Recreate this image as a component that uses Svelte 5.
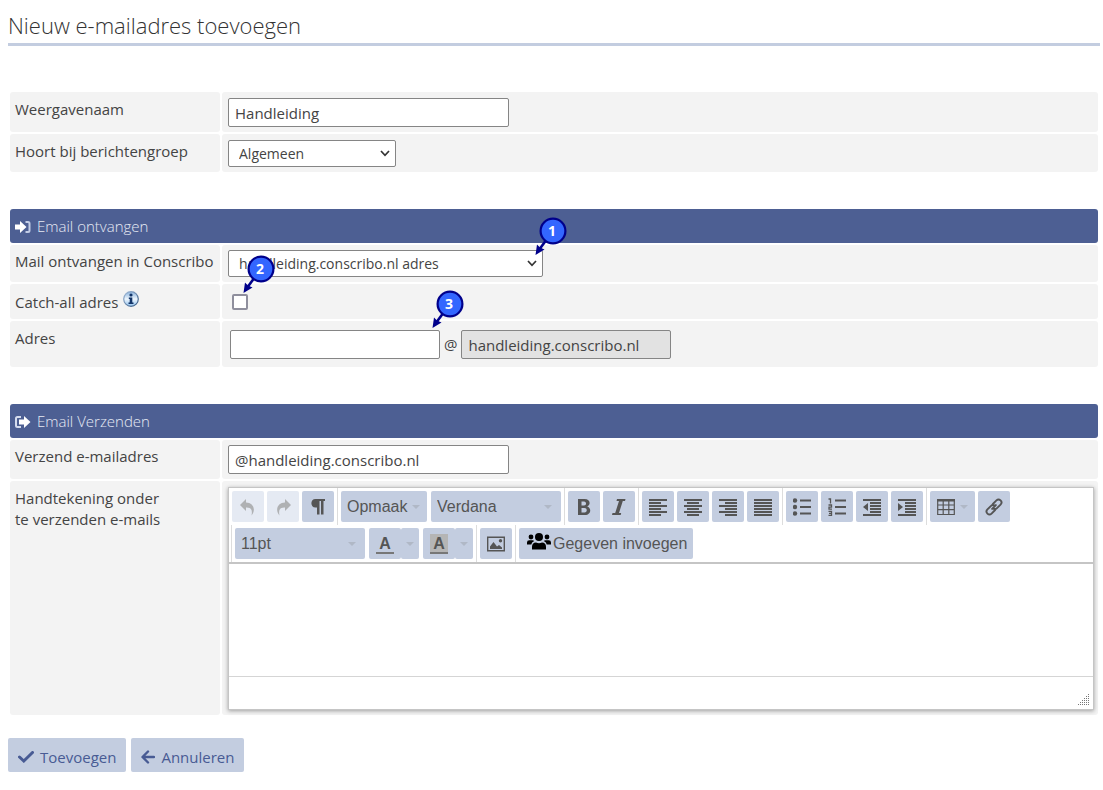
<script>
  let displayName = $state('Handleiding');
  let group = $state('Algemeen');
  let receive = $state('handleiding.conscribo.nl adres');
  let catchAll = $state(false);
  let address = $state('');
  let sender = $state('@handleiding.conscribo.nl');
  let signature = $state('');

  const aligns = [
    { name: 'Links uitlijnen', lines: [[0, 18], [0, 12], [0, 18], [0, 12], [0, 18], [0, 12]] },
    { name: 'Centreren', lines: [[0, 18], [3, 12], [0, 18], [3, 12], [0, 18], [3, 12]] },
    { name: 'Rechts uitlijnen', lines: [[0, 18], [6, 12], [0, 18], [6, 12], [0, 18], [6, 12]] },
    { name: 'Uitvullen', lines: [[0, 18], [0, 18], [0, 18], [0, 18], [0, 18], [0, 18]] }
  ];
</script>

{#snippet marker(n, kind)}
  <svg class="marker {kind}" viewBox="0 0 34 40" width="34" height="40" aria-hidden="true">
    <path d="M13 23 L6 32.500" stroke="#00008b" stroke-width="2.600" />
    <path d="M1.500 39 L3 28.500 L6 31.500 L10.500 33.500 Z" fill="#00008b" />
    <circle cx="19" cy="15" r="12.400" fill="#3366ff" stroke="#00008b" stroke-width="2.200" />
    <text x="18" y="20" text-anchor="middle">{n}</text>
  </svg>
{/snippet}

{#snippet caret()}
  <svg class="caret" viewBox="0 0 8 4" width="8" height="4" aria-hidden="true"><path d="M0 0h8L4 4z" fill="#b0b8c6" /></svg>
{/snippet}

{#snippet chevron()}
  <svg class="chevron" viewBox="0 0 10 7" width="10" height="7" aria-hidden="true"><path d="M1 1l4 4.300L9 1" fill="none" stroke="#333" stroke-width="1.700" /></svg>
{/snippet}

<main>
  <h1>Nieuw e-mailadres toevoegen</h1>

  <form onsubmit={(e) => e.preventDefault()}>
    <section>
      <div class="row">
        <div class="cell"><label for="name">Weergavenaam</label></div>
        <div class="cell"><input id="name" class="text wide" type="text" bind:value={displayName} /></div>
      </div>
      <div class="row">
        <div class="cell"><label for="group">Hoort bij berichtengroep</label></div>
        <div class="cell">
          <div class="drop short">
            <select id="group" bind:value={group}><option>Algemeen</option></select>
            {@render chevron()}
          </div>
        </div>
      </div>
    </section>

    <section>
      <h2>
        <svg viewBox="0 0 16 14" width="16" height="14" aria-hidden="true">
          <path d="M0 4.500h5V1l6.500 6L5 13V9.500H0z" fill="#fff" />
          <path d="M10.500 2H13q1.500 0 1.500 1.500v7q0 1.500-1.500 1.500h-2.500" fill="none" stroke="#c3cde6" stroke-width="2" />
        </svg>
        Email ontvangen
      </h2>
      <div class="row">
        <div class="cell tight"><label for="receive">Mail ontvangen in Conscribo</label></div>
        <div class="cell tight">
          <div class="drop long">
            <select id="receive" bind:value={receive}><option>handleiding.conscribo.nl adres</option></select>
            {@render chevron()}
            {@render marker(1, 'on-drop')}
          </div>
        </div>
      </div>
      <div class="row">
        <div class="cell catch">
          <label for="catch">Catch-all adres</label>
          <svg viewBox="0 0 16 16" width="16" height="16" role="img" aria-label="Informatie">
            <defs>
              <linearGradient id="info" x1="0" y1="0" x2="0" y2="1">
                <stop offset="0" stop-color="#86b0dc" /><stop offset=".5" stop-color="#eef6fd" /><stop offset="1" stop-color="#8fc0ee" />
              </linearGradient>
              <linearGradient id="ring" x1="0" y1="0" x2="1" y2="1">
                <stop offset="0" stop-color="#a3bcda" /><stop offset="1" stop-color="#34567f" />
              </linearGradient>
            </defs>
            <circle cx="8" cy="8" r="7.300" fill="url(#info)" stroke="url(#ring)" stroke-width="1.200" />
            <circle cx="8" cy="4" r="1.600" fill="#123468" />
            <path d="M5.800 6.500h3.500v5h1.200V13H5.500v-1.500h1.200V8h-.900z" fill="#123468" />
          </svg>
        </div>
        <div class="cell check">
          <span class="box">
            <input id="catch" type="checkbox" bind:checked={catchAll} />
            {@render marker(2, 'on-check')}
          </span>
        </div>
      </div>
      <div class="row">
        <div class="cell"><label for="address">Adres</label></div>
        <div class="cell address">
          <span class="box">
            <input id="address" class="text" type="text" bind:value={address} />
            {@render marker(3, 'on-text')}
          </span>
          <span>@</span>
          <input class="text" type="text" value="handleiding.conscribo.nl" aria-label="Domein" disabled />
        </div>
      </div>
    </section>

    <section>
      <h2>
        <svg viewBox="0 0 16 14" width="16" height="14" aria-hidden="true">
          <path d="M4 4.500h5V1l6.500 6L9 13V9.500H4z" fill="#fff" />
          <path d="M6 2H2.500Q1 2 1 3.500v7Q1 12 2.500 12H6" fill="none" stroke="#d5dcee" stroke-width="2" />
        </svg>
        Email Verzenden
      </h2>
      <div class="row">
        <div class="cell tight"><label for="sender">Verzend e-mailadres</label></div>
        <div class="cell tight"><input id="sender" class="text wide" type="text" bind:value={sender} /></div>
      </div>
      <div class="row">
        <div class="cell"><label for="signature">Handtekening onder<br />te verzenden e-mails</label></div>
        <div class="cell">
          <div class="editor">
            <div class="toolbar" role="toolbar" aria-label="Opmaak">
              <div class="group">
                <button type="button" disabled aria-label="Ongedaan maken">
                  <svg viewBox="0 0 18 18" width="18" height="18"><path d="M7 1L1 7l6 6V9.500c4-.300 7 1.500 5.500 8C17.500 11.500 14 4.500 7 4.500z" fill="#999" /></svg>
                </button>
                <button type="button" disabled aria-label="Opnieuw">
                  <svg viewBox="0 0 18 18" width="18" height="18"><path d="M11 1l6 6-6 6V9.500c-4-.300-7 1.500-5.500 8C.500 11.500 4 4.500 11 4.500z" fill="#999" /></svg>
                </button>
                <button type="button" aria-label="Alineatekens">
                  <svg viewBox="0 0 16 18" width="16" height="18"><path d="M5.500 1H15v2h-1.500v13.500H11V3H9.500v13.500H7V9.500H5.500C0 9.500 0 1 5.500 1z" fill="#555" /></svg>
                </button>
              </div>
              <div class="group lists">
                <div class="pick format"><select aria-label="Opmaakstijl"><option>Opmaak</option></select>{@render caret()}</div>
                <div class="pick"><select aria-label="Lettertype"><option>Verdana</option></select>{@render caret()}</div>
              </div>
              <div class="group">
                <button type="button" aria-label="Vet">
                  <svg viewBox="0 0 14 18" width="14" height="18"><path fill-rule="evenodd" d="M1 1h6.500c6 0 6.500 6 2.700 7.500C15 10 14 17 8 17H1zM4.500 3.500v4H7c2.700 0 2.700-4 0-4zM4.500 10v4.500h3c3 0 3-4.500 0-4.500z" fill="#555" /></svg>
                </button>
                <button type="button" aria-label="Cursief">
                  <svg viewBox="0 0 14 18" width="14" height="18"><path d="M5 1h8.500l-.500 2h-2.200L7 15h2.200l-.500 2H0l.500-2h2.700L7 3H4.500z" fill="#555" /></svg>
                </button>
              </div>
              <div class="group">
                {#each aligns as a}
                  <button type="button" aria-label={a.name}>
                    <svg viewBox="0 0 18 18" width="18" height="18">
                      {#each a.lines as [x, w], i}<rect {x} y={i * 3 + 1} width={w} height="2" fill="#555" />{/each}
                    </svg>
                  </button>
                {/each}
              </div>
              <div class="group">
                <button type="button" aria-label="Opsommingstekens">
                  <svg viewBox="0 0 18 18" width="18" height="18" fill="#555"><circle cx="2" cy="2.500" r="2.200" /><circle cx="2" cy="9" r="2.200" /><circle cx="2" cy="15.500" r="2.200" /><path d="M7 1.500h11v2H7zM7 8h11v2H7zM7 14.500h11v2H7z" /></svg>
                </button>
                <button type="button" aria-label="Genummerde lijst">
                  <svg viewBox="0 0 18 18" width="18" height="18"><path d="M7 1.500h11v2H7zM7 8h11v2H7zM7 14.500h11v2H7z" fill="#555" /><path d="M.500 1H2.500V5.500M.500 7h3v2.200h-2.500v2h3M.500 13.300h3v4h-3M1 15.300h2.500" fill="none" stroke="#555" stroke-width="1.300" /></svg>
                </button>
                <button type="button" aria-label="Inspringing verkleinen">
                  <svg viewBox="0 0 18 18" width="18" height="18" fill="#555"><path d="M0 1h18v2H0zM7 4h11v2H7zM7 7h11v2H7zM7 10h11v2H7zM7 13h11v2H7zM0 16h18v2H0zM5 5v8L0 9z" /></svg>
                </button>
                <button type="button" aria-label="Inspringing vergroten">
                  <svg viewBox="0 0 18 18" width="18" height="18" fill="#555"><path d="M0 1h18v2H0zM7 4h11v2H7zM7 7h11v2H7zM7 10h11v2H7zM7 13h11v2H7zM0 16h18v2H0zM0 5v8l5-4z" /></svg>
                </button>
              </div>
              <div class="group">
                <button type="button" class="table" aria-label="Tabel">
                  <svg viewBox="0 0 18 18" width="18" height="18"><path d="M.700 2h16.600v14.500H.700zM1 7h16M1 11.700h16M6.200 3v13M11.800 3v13" fill="none" stroke="#555" stroke-width="1.200" /><path d="M0 1h18v2.500H0z" fill="#555" /></svg>
                  {@render caret()}
                </button>
                <button type="button" aria-label="Link invoegen">
                  <svg viewBox="0 0 18 18" width="20" height="20"><g fill="none" stroke="#555" stroke-width="1.700" stroke-linecap="round"><path d="M8 6.300l3.200-3.200a2.500 2.500 0 0 1 3.700 3.700l-3.200 3.200a2.500 2.500 0 0 1-3.300.300" /><path d="M10 11.700l-3.200 3.200a2.500 2.500 0 0 1-3.700-3.700l3.200-3.200a2.500 2.500 0 0 1 3.300-.300" /><path d="M7.300 10.700l3.400-3.400" /></g></svg>
                </button>
              </div>
              <div class="group lists">
                <div class="pick"><select aria-label="Tekengrootte"><option>11pt</option></select>{@render caret()}</div>
                <div class="split">
                  <button type="button" class="color" aria-label="Tekstkleur"><span>A</span></button>
                  <button type="button" class="more" aria-label="Kies tekstkleur">{@render caret()}</button>
                </div>
                <div class="split">
                  <button type="button" class="color back" aria-label="Achtergrondkleur"><span>A</span></button>
                  <button type="button" class="more" aria-label="Kies achtergrondkleur">{@render caret()}</button>
                </div>
              </div>
              <div class="group">
                <button type="button" aria-label="Afbeelding">
                  <svg viewBox="0 0 18 16" width="18" height="16"><path d="M.700 1.200h16.600v13.600H.700z" fill="none" stroke="#555" stroke-width="1.400" /><path d="M3 13V10.500L6.500 6l3.500 4.500 2-1.500 3 2.500V13z" fill="#555" /><circle cx="13.500" cy="4.700" r="1.700" fill="#555" /></svg>
                </button>
              </div>
              <div class="group">
                <button type="button" class="insert">
                  <svg viewBox="0 0 24 17" width="24" height="17"><circle cx="12" cy="4" r="4" /><circle cx="4" cy="4" r="2.400" /><circle cx="20" cy="4" r="2.400" /><path d="M5 16.500v-2.500q0-4.500 4-4.500 3 1.500 6 0 4 0 4 4.500v2.500zM0 11.500V9.500Q0 7.300 2.300 7.300H5.500q1 0 1.700.700Q4.500 9 4.300 11.500zM24 11.500V9.500q0-2.200-2.300-2.200H18.500q-1 0-1.700.700 2.700 1 2.900 3.500z" /></svg>
                  Gegeven invoegen
                </button>
              </div>
            </div>
            <textarea id="signature" bind:value={signature}></textarea>
            <div class="status">
              <svg viewBox="0 0 12 12" width="12" height="12" fill="#777" aria-hidden="true">
                {#each [0, 1, 2, 3, 4, 5] as c}{#each Array(c + 1) as _, r}<rect x={c * 2} y={10 - r * 2} width="1" height="1" />{/each}{/each}
              </svg>
            </div>
          </div>
        </div>
      </div>
    </section>

    <footer>
      <button type="submit">
        <svg viewBox="0 0 16 12" width="16" height="12" aria-hidden="true"><path d="M1.500 6l4.300 4L14.500 1.500" fill="none" stroke="#485b94" stroke-width="3" stroke-linecap="round" /></svg>
        Toevoegen
      </button>
      <button type="button">
        <svg viewBox="0 0 14 14" width="14" height="14" aria-hidden="true"><path d="M7 1.500L1.500 7 7 12.500M2 7h11" fill="none" stroke="#485b94" stroke-width="2.400" stroke-linecap="round" stroke-linejoin="round" /></svg>
        Annuleren
      </button>
    </footer>
  </form>
</main>

<style>
  :global(body) { margin: 0; background: #fff; }
  main, main :global(*) { box-sizing: border-box; }
  main {
    padding: 8px 3px 16px 8px;
    color: #444;
    font: 15px/21px "Open Sans", "Noto Sans", sans-serif;
  }
  svg { display: block; flex: none; }
  h1 {
    margin: 0 0 46px;
    padding-bottom: 1px;
    border-bottom: 3px solid #c3cde0;
    font-size: 22px;
    line-height: 34px;
    font-weight: 300;
    color: #333;
  }
  form { padding: 0 2px; }
  section { display: grid; gap: 2px; margin-bottom: 37px; }
  section:last-of-type { margin-bottom: 23px; }
  h2 {
    display: flex;
    align-items: center;
    gap: 6px;
    height: 34px;
    margin: 0;
    padding: 1px 5px 0;
    border-radius: 3px;
    background: #4d5f93;
    color: #e6eaf4;
    font-size: 15px;
    font-weight: 300;
  }
  .row { display: grid; grid-template-columns: 210px 1fr; gap: 2px; }
  .cell {
    min-width: 0;
    padding: 6px 4px 5px 6px;
    border-radius: 3px;
    background: #f3f3f3;
  }
  .cell:first-child { padding: 7px 4px 5px 5px; white-space: nowrap; }
  .cell.tight { padding-top: 5px; }
  .cell.tight:first-child { padding-top: 6px; }
  .cell.catch { display: flex; gap: 5px; padding: 8px 4px 6px 5px; }
  .catch svg { margin-top: -1px; }
  .check { display: flex; align-items: center; padding: 5px 10px; }
  .box, .drop { position: relative; }
  .address { display: flex; align-items: center; gap: 4px; padding: 9px 8px 8px; }
  .address .text { width: 210px; }

  input, select, textarea, button { margin: 0; font: inherit; color: inherit; }
  .text {
    display: block;
    height: 29px;
    padding: 1px 6px 0;
    border: 1px solid #858585;
    border-radius: 2px;
    background: #fff;
  }
  .text:disabled { background: #e2e2e2; color: #444; }
  .wide { width: 281px; }
  input[type='checkbox'] {
    appearance: none;
    display: block;
    width: 16px;
    height: 16px;
    border: 2px solid #8f8f9d;
    border-radius: 2px;
    background: #fff;
  }
  input[type='checkbox']:checked { background: #4d5f93; }
  .drop, .pick { display: grid; align-items: center; }
  .drop > select, .drop > .chevron, .pick > select, .pick > .caret { grid-area: 1 / 1; }
  .drop select {
    appearance: none;
    width: 100%;
    height: 27px;
    padding: 0 24px 0 10px;
    border: 1px solid #858585;
    border-radius: 2px;
    background: #fff;
    font-size: 14px;
  }
  .chevron { justify-self: end; margin-right: 6px; pointer-events: none; }
  .short { width: 168px; }
  .long { width: 315px; }

  .marker { position: absolute; z-index: 1; pointer-events: none; }
  .marker text { font: bold 14px "Open Sans", sans-serif; fill: #fff; }
  .on-drop { top: -34px; right: -25px; }
  .on-check { top: -40px; left: 10px; }
  .on-text { top: -41px; right: -25px; }

  .editor {
    border: 1px solid #c5c5c5;
    background: #fff;
    box-shadow: 0 1px 4px rgba(0, 0, 0, 0.35);
    color: #555;
    font: 16px/20px "Liberation Sans", Arial, sans-serif;
  }
  .toolbar {
    display: flex;
    flex-wrap: wrap;
    padding-left: 2px;
    border-bottom: 2px solid #c5c5c5;
  }
  .group { display: flex; gap: 3px; padding: 3px; border-left: 1px solid #ddd; }
  .group.lists { gap: 4px; }
  .group:first-child { border-left: 0; padding-left: 1px; }
  .group button, .pick select {
    display: flex;
    align-items: center;
    justify-content: center;
    width: 32px;
    height: 31px;
    padding: 0;
    border: 0;
    border-radius: 2px;
    background: #c3cde0;
  }
  .group button:disabled { background: #e5eaf3; }
  .group button:disabled svg { opacity: 0.7; }
  .pick select { appearance: none; width: 130px; padding: 0 20px 0 6px; }
  .pick.format select { width: 86px; padding-right: 8px; }
  .caret { justify-self: end; margin-right: 9px; pointer-events: none; }
  .format .caret { margin-right: 7px; }
  .group button.table { width: 45px; gap: 5px; padding: 0 6px; }
  .table .caret, .more .caret { margin-right: 0; }
  .split { display: flex; }
  .group .split .more { width: 18px; }
  .color span {
    width: 18px;
    height: 20px;
    border-bottom: 2px solid #777;
    font-weight: bold;
    line-height: 20px;
  }
  .back span { background: #b5b5b5; }
  .group button.insert { width: auto; gap: 2px; padding: 0 6px 0 8px; }
  .insert svg { fill: #000; margin-bottom: 4px; }
  textarea {
    display: block;
    width: 100%;
    height: 112px;
    padding: 8px;
    border: 0;
    outline: 0;
    resize: none;
    background: #fff;
  }
  .status {
    display: flex;
    align-items: flex-end;
    justify-content: flex-end;
    height: 33px;
    padding: 3px;
    border-top: 1px solid #d5d5d5;
  }

  footer { display: flex; gap: 5px; margin-left: -2px; }
  footer button {
    display: flex;
    align-items: center;
    gap: 6px;
    height: 34px;
    padding: 4px 10px 0;
    border: 0;
    border-radius: 2px;
    background: #c3cde0;
    color: #485b94;
  }
</style>
